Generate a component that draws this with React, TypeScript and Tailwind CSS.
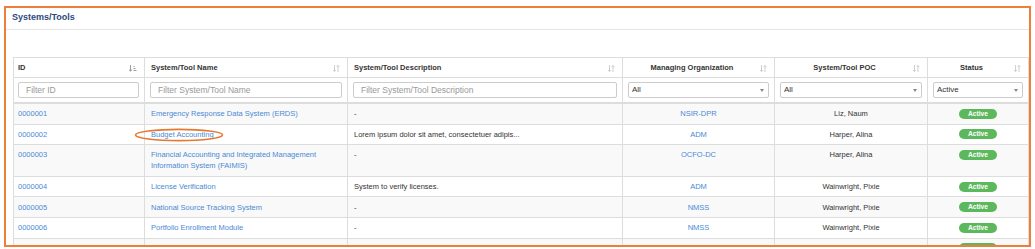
import React from "react";

type Row = {
  id: string;
  name: string;
  desc: string;
  org: string;
  poc: string;
};

const rows: Row[] = [
  { id: "0000001", name: "Emergency Response Data System (ERDS)", desc: "-", org: "NSIR-DPR", poc: "Liz, Naum" },
  { id: "0000002", name: "Budget Accounting", desc: "Lorem ipsum dolor sit amet, consectetuer adipis...", org: "ADM", poc: "Harper, Alina" },
  { id: "0000003", name: "Financial Accounting and Integrated Management Information System (FAIMIS)", desc: "-", org: "OCFO-DC", poc: "Harper, Alina" },
  { id: "0000004", name: "License Verification", desc: "System to verify licenses.", org: "ADM", poc: "Wainwright, Pixie" },
  { id: "0000005", name: "National Source Tracking System", desc: "-", org: "NMSS", poc: "Wainwright, Pixie" },
  { id: "0000006", name: "Portfolio Enrollment Module", desc: "-", org: "NMSS", poc: "Wainwright, Pixie" },
  { id: "0000007", name: "Web Based Licensing", desc: "-", org: "NMSS", poc: "Wainwright, Pixie" },
];

function SortIcon({ active }: { active?: boolean }) {
  if (active) {
    return (
      <svg width="8" height="7" viewBox="0 0 8 7" className="absolute right-[7px] top-[7px]">
        <g stroke="#9a9a9a" strokeWidth="1" fill="none">
          <line x1="1.5" y1="0" x2="1.5" y2="6" />
          <polyline points="0,4.5 1.5,6.3 3,4.5" />
          <line x1="4.5" y1="1.5" x2="5.5" y2="1.5" />
          <line x1="4.5" y1="3.5" x2="6.5" y2="3.5" />
          <line x1="4.5" y1="5.5" x2="7.5" y2="5.5" />
        </g>
      </svg>
    );
  }
  return (
    <svg width="7" height="7" viewBox="0 0 7 7" className="absolute right-[7px] top-[7px]">
      <g stroke="#cfcfcf" strokeWidth="1" fill="none">
        <line x1="1.5" y1="0" x2="1.5" y2="6.5" />
        <polyline points="0.2,5 1.5,6.6 2.8,5" />
        <line x1="5" y1="0.5" x2="5" y2="7" />
        <polyline points="3.7,2 5,0.4 6.3,2" />
      </g>
    </svg>
  );
}

function FakeSelect({ value }: { value: string }) {
  return (
    <div className="h-[16px] border border-[#cccccc] rounded-[2px] bg-white flex items-center justify-between pl-[3px] pr-[4px] text-[8px] text-[#333]">
      <span>{value}</span>
      <svg width="4" height="3" viewBox="0 0 4 3">
        <polygon points="0,0 4,0 2,3" fill="#888" />
      </svg>
    </div>
  );
}

function FakeInput({ placeholder }: { placeholder: string }) {
  return (
    <div className="h-[16px] border border-[#cccccc] rounded-[2px] bg-white flex items-center pl-[7px] text-[8.5px] text-[#999]">
      {placeholder}
    </div>
  );
}

export default function App() {
  const th = "border border-[#dddddd] py-[4px] leading-[11px] text-[7.5px] font-bold text-[#333] relative";
  const td = "border border-[#dddddd] py-[4.3px] leading-[11px] text-[7.5px] align-top";
  const fc = "border-x border-t border-[#dddddd] border-b-2 py-[4px] px-[5px]";
  return (
    <div
      className="w-[1035px] h-[249px] bg-white overflow-hidden"
      style={{ fontFamily: '"Liberation Sans", Arial, sans-serif' }}
    >
      <div className="ml-[4px] mt-[6px] w-[1027px] h-[241px] border-2 border-[#ef7d3c] overflow-hidden">
        <div className="h-[22px] border-b border-[#e6e6e6] pl-[6px] pb-[1px] flex items-center">
          <span className="text-[9px] font-bold text-[#2d4a7a]">Systems/Tools</span>
        </div>
        <div className="pl-[7px] pt-[27px]">
          <table className="table-fixed border-collapse w-[1015px]">
            <colgroup>
              <col className="w-[131px]" />
              <col className="w-[203px]" />
              <col className="w-[275px]" />
              <col className="w-[152px]" />
              <col className="w-[153px]" />
              <col className="w-[101px]" />
            </colgroup>
            <thead>
              <tr>
                <th className={`${th} text-left pl-[4px] pr-[18px]`}>
                  ID
                  <SortIcon active />
                </th>
                <th className={`${th} text-left pl-[6px] pr-[18px]`}>
                  System/Tool Name
                  <SortIcon />
                </th>
                <th className={`${th} text-left pl-[6px] pr-[18px]`}>
                  System/Tool Description
                  <SortIcon />
                </th>
                <th className={`${th} text-center pl-[5px] pr-[18px]`}>
                  Managing Organization
                  <SortIcon />
                </th>
                <th className={`${th} text-center pl-[5px] pr-[18px]`}>
                  System/Tool POC
                  <SortIcon />
                </th>
                <th className={`${th} text-center pl-[5px] pr-[18px]`}>
                  Status
                  <SortIcon />
                </th>
              </tr>
              <tr>
                <td className={`${fc} pl-[4px]`}>
                  <FakeInput placeholder="Filter ID" />
                </td>
                <td className={fc}>
                  <FakeInput placeholder="Filter System/Tool Name" />
                </td>
                <td className={fc}>
                  <FakeInput placeholder="Filter System/Tool Description" />
                </td>
                <td className={fc}>
                  <FakeSelect value="All" />
                </td>
                <td className={fc}>
                  <FakeSelect value="All" />
                </td>
                <td className={fc}>
                  <FakeSelect value="Active" />
                </td>
              </tr>
            </thead>
            <tbody>
              {rows.map((r, i) => (
                <tr key={r.id} className={i % 2 === 0 ? "bg-[#f9f9f9]" : "bg-white"}>
                  <td className={`${td} pl-[4px] pr-[5px] text-[#4a8ad4]`}>{r.id}</td>
                  <td className={`${td} pl-[6px] pr-[5px] text-[#4a8ad4] relative`}>
                    {r.name}
                    {r.id === "0000002" && (
                      <svg
                        width="90"
                        height="14"
                        viewBox="0 0 90 14"
                        className="absolute left-[-11px] top-[3.5px] pointer-events-none"
                      >
                        <ellipse cx="45" cy="7" rx="43.5" ry="5.6" fill="none" stroke="#e8772f" strokeWidth="1.6" />
                      </svg>
                    )}
                  </td>
                  <td className={`${td} pl-[6px] pr-[5px] text-[#333]`}>{r.desc}</td>
                  <td className={`${td} px-[5px] text-center text-[#4a8ad4]`}>{r.org}</td>
                  <td className={`${td} px-[5px] text-center text-[#333]`}>{r.poc}</td>
                  <td className={`${td} px-[5px] text-center`}>
                    <span className="inline-block w-[38px] h-[10px] rounded-full bg-[#5cb85c] text-white font-bold text-[6.7px] leading-[10px] text-center align-top mt-[0.5px]">
                      Active
                    </span>
                  </td>
                </tr>
              ))}
            </tbody>
          </table>
        </div>
      </div>
    </div>
  );
}
